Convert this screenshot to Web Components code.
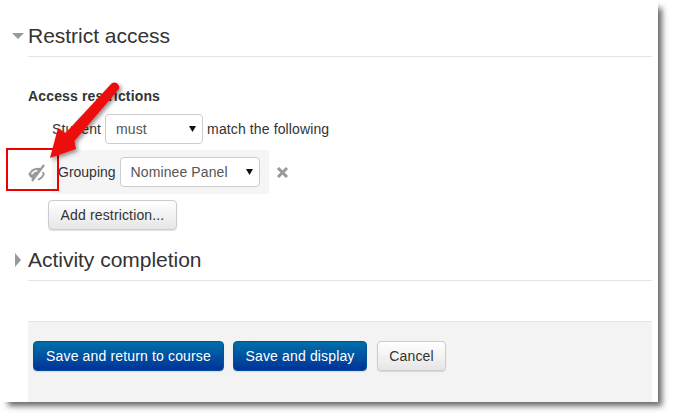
<!DOCTYPE html>
<html>
<head>
<meta charset="utf-8">
<title>Restrict access</title>
<style>
html, body { margin: 0; background: #fff; }
body { font-family: "Liberation Sans", Arial, sans-serif; color: #333; width: 673px; height: 417px; overflow: hidden; }
</style>
</head>
<body>
<app-sheet>
  <app-section heading="Restrict access" open>
    <access-title>Access restrictions</access-title>
    <access-match></access-match>
    <access-rule></access-rule>
    <app-button style="width: 129px; margin: 6px 0 0 20px">Add restriction...</app-button>
  </app-section>
  <app-section heading="Activity completion"></app-section>
  <app-footer>
    <app-button primary style="width: 191px">Save and return to course</app-button>
    <app-button primary style="width: 134px">Save and display</app-button>
    <app-button style="width: 69px; margin-left: 1px">Cancel</app-button>
  </app-footer>
  <call-out></call-out>
</app-sheet>

<script>
class AppSheet extends HTMLElement{
    constructor(){
        super();
        this.attachShadow({mode: 'open'}).innerHTML = `
        <style>
            :host{
                display: flex;
                flex-direction: column;
                position: relative;
                box-sizing: border-box;
                width: 658px;
                height: 402px;
                padding-left: 28px;
                padding-right: 6px;
                padding-top: 16px;
                background: #fff;
                box-shadow: 6px 6px 6px -2px #666;
            }
            ::slotted(*){ flex: none; }
        </style>
        <slot></slot>`;
    }
}

class AppSection extends HTMLElement{
    constructor(){
        super();
        this.attachShadow({mode: 'open'});
    }
    connectedCallback(){
        let open = this.hasAttribute('open');
        this.shadowRoot.innerHTML = `
        <style>
            :host{ display: block; }
            :host([open]){ height: 223px; }
            h2{
                position: relative;
                margin: 0;
                height: ${open ? 40 : 41}px;
                font: 400 21px/${open ? 40 : 42}px "Liberation Sans", Arial, sans-serif;
                letter-spacing: -.02px;
                color: #333;
                border-bottom: 1px solid #e5e5e5;
            }
            svg{ position: absolute; left: -16px; top: 16px; }
            .body{ padding-top: 30px; }
        </style>
        <h2>
            ${open
                ? '<svg width="13" height="8" viewBox="0 0 13 8"><path d="M0 1h12L6 7z" fill="#999"/></svg>'
                : '<svg width="8" height="15" viewBox="0 0 8 15" style="left:-14px;top:14px"><path d="M1 0l6 7L1 14z" fill="#999"/></svg>'}
            ${this.getAttribute('heading')}
        </h2>
        ${open ? '<div class="body"><slot></slot></div>' : ''}`;
    }
}

class AccessTitle extends HTMLElement{
    constructor(){
        super();
        this.attachShadow({mode: 'open'}).innerHTML = `
        <style>
            :host{ display: block; font: 700 14px/18px "Liberation Sans", Arial, sans-serif; letter-spacing: .15px; color: #333; }
        </style>
        <slot></slot>`;
    }
}

class AppSelect extends HTMLElement{
    constructor(){
        super();
        this.attachShadow({mode: 'open'});
    }
    connectedCallback(){
        this.shadowRoot.innerHTML = `
        <style>
            :host{
                display: flex;
                align-items: center;
                justify-content: space-between;
                box-sizing: border-box;
                height: 30px;
                padding: 0 6px 0 10px;
                background: #fff;
                border: 1px solid #ccc;
                border-radius: 4px;
                font: 14px "Liberation Sans", Arial, sans-serif;
                letter-spacing: .1px;
                color: #555;
            }
            svg{ display: block; }
        </style>
        <span>${this.getAttribute('value')}</span>
        <svg width="7" height="6" viewBox="0 0 7 6"><path d="M0 0h7L3.5 6z" fill="#111"/></svg>`;
    }
}

class AccessMatch extends HTMLElement{
    constructor(){
        super();
        this.attachShadow({mode: 'open'}).innerHTML = `
        <style>
            :host{
                display: flex;
                align-items: center;
                gap: 4px;
                margin-top: 9px;
                padding-left: 24px;
                font: 14px "Liberation Sans", Arial, sans-serif;
                letter-spacing: .12px;
                color: #333;
            }
            app-select{ width: 98px; }
        </style>
        <span>Student</span>
        <app-select value="must"></app-select>
        <span>match the following</span>`;
    }
}

class AccessRule extends HTMLElement{
    constructor(){
        super();
        this.attachShadow({mode: 'open'}).innerHTML = `
        <style>
            :host{
                display: flex;
                align-items: center;
                margin-top: 6px;
                font: 14px "Liberation Sans", Arial, sans-serif;
                color: #333;
            }
            .eye{ display: block; width: 24px; flex: none; }
            .box{
                display: flex;
                align-items: center;
                gap: 4px;
                box-sizing: border-box;
                width: 217px;
                height: 44px;
                padding: 0 9px 0 6px;
                background: #f5f5f5;
                border-radius: 4px;
            }
            app-select{ width: 140px; }
            .del{ display: block; margin-left: 7px; }
        </style>
        <svg class="eye" width="24" height="22" viewBox="0 0 24 22">
            <path d="M0.3 13C3 9 6 6.8 9.6 6.8c1.4 0 2.6.3 3.8.8L5.5 18.5C3.2 17.5 1.4 15.5.3 13z" fill="#999"/>
            <path d="M3.5 13.2C5 11 7 9.7 9.5 9.6" fill="none" stroke="#f2f2f2" stroke-width="1.8"/>
            <path d="M4 20L16 4" fill="none" stroke="#999" stroke-width="2.2"/>
            <path d="M10 18.6c2.4-.6 4.4-2.4 5.8-5.4-.3-.8-.7-1.4-1.2-2" fill="none" stroke="#999" stroke-width="1.8"/>
        </svg>
        <div class="box">
            <span>Grouping</span>
            <app-select value="Nominee Panel"></app-select>
        </div>
        <svg class="del" width="13" height="13" viewBox="0 0 13 13"><path d="M2 2l9 9M11 2l-9 9" stroke="#999" stroke-width="3" fill="none"/></svg>`;
    }
}

class AppButton extends HTMLElement{
    constructor(){
        super();
        this.attachShadow({mode: 'open'}).innerHTML = `
        <style>
            :host{
                display: inline-block;
                box-sizing: border-box;
                height: 30px;
                border: 1px solid #ccc;
                border-radius: 4px;
                font: 14px/28px "Liberation Sans", Arial, sans-serif;
                letter-spacing: .15px;
                text-align: center;
                color: #333;
                background: linear-gradient(#fff, #e6e6e6);
                box-shadow: 0 1px 1px rgba(0,0,0,.12);
                white-space: nowrap;
            }
            :host([primary]){
                color: #fff;
                border-color: #04519b;
                background: linear-gradient(#0070a8, #003399);
            }
        </style>
        <slot></slot>`;
    }
}

class AppFooter extends HTMLElement{
    constructor(){
        super();
        this.attachShadow({mode: 'open'}).innerHTML = `
        <style>
            :host{
                display: flex;
                align-items: flex-start;
                gap: 9px;
                box-sizing: border-box;
                height: 81px;
                margin-top: 40px;
                padding: 19px 5px 0;
                background: #f3f3f3;
                border-top: 1px solid #e5e5e5;
            }
        </style>
        <slot></slot>`;
    }
}

// red annotation drawn on top of the form
class CallOut extends HTMLElement{
    constructor(){
        super();
        this.attachShadow({mode: 'open'}).innerHTML = `
        <style>
            :host{ position: absolute; left: 0; top: 0; width: 130px; height: 200px; pointer-events: none; }
            svg{ display: block; overflow: visible; }
        </style>
        <svg width="130" height="200" viewBox="0 0 130 200">
            <defs>
                <filter id="s" x="-30%" y="-30%" width="170%" height="170%">
                    <feDropShadow dx="2" dy="2" stdDeviation="2" flood-color="#000" flood-opacity=".45"/>
                </filter>
            </defs>
            <rect x="7" y="149" width="51" height="41" fill="none" stroke="#ee0000" stroke-width="2"/>
            <g filter="url(#s)">
                <path d="M50 158L58 128L65.5 133L112 83A5 5 0 0 1 119 89L74.5 141L76 149z" fill="#ee1111"/>
            </g>
        </svg>`;
    }
}

customElements.define('app-sheet', AppSheet);
customElements.define('app-section', AppSection);
customElements.define('access-title', AccessTitle);
customElements.define('app-select', AppSelect);
customElements.define('access-match', AccessMatch);
customElements.define('access-rule', AccessRule);
customElements.define('app-button', AppButton);
customElements.define('app-footer', AppFooter);
customElements.define('call-out', CallOut);
</script>
</body>
</html>
